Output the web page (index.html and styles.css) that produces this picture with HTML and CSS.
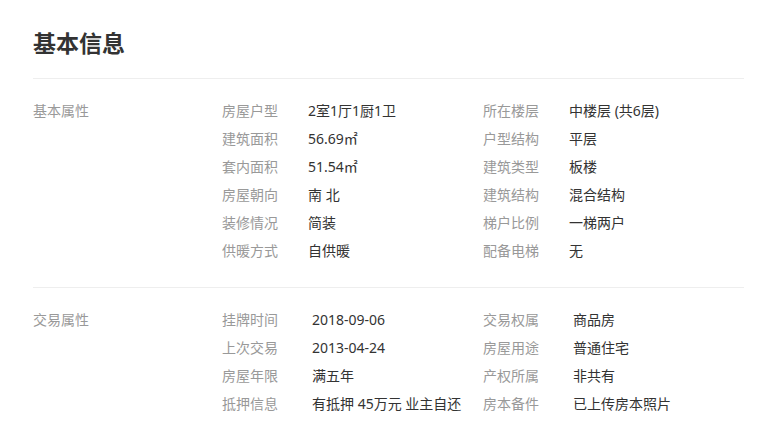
FILE: index.html
```html
<!DOCTYPE html>
<html lang="zh-CN">
<head>
<meta charset="utf-8">
<link rel="stylesheet" href="styles.css">
</head>
<body>
<div class="wrap">
  <h2 class="title">基本信息</h2>
  <div class="section">
    <div class="sec-label">基本属性</div>
    <div class="grid">
      <div class="item"><span class="k">房屋户型</span><span class="v">2室1厅1厨1卫</span></div>
      <div class="item"><span class="k">所在楼层</span><span class="v">中楼层 (共6层)</span></div>
      <div class="item"><span class="k">建筑面积</span><span class="v">56.69㎡</span></div>
      <div class="item"><span class="k">户型结构</span><span class="v">平层</span></div>
      <div class="item"><span class="k">套内面积</span><span class="v">51.54㎡</span></div>
      <div class="item"><span class="k">建筑类型</span><span class="v">板楼</span></div>
      <div class="item"><span class="k">房屋朝向</span><span class="v">南 北</span></div>
      <div class="item"><span class="k">建筑结构</span><span class="v">混合结构</span></div>
      <div class="item"><span class="k">装修情况</span><span class="v">简装</span></div>
      <div class="item"><span class="k">梯户比例</span><span class="v">一梯两户</span></div>
      <div class="item"><span class="k">供暖方式</span><span class="v">自供暖</span></div>
      <div class="item"><span class="k">配备电梯</span><span class="v">无</span></div>
    </div>
  </div>
  <div class="section trade">
    <div class="sec-label">交易属性</div>
    <div class="grid">
      <div class="item"><span class="k">挂牌时间</span><span class="v">2018-09-06</span></div>
      <div class="item"><span class="k">交易权属</span><span class="v">商品房</span></div>
      <div class="item"><span class="k">上次交易</span><span class="v">2013-04-24</span></div>
      <div class="item"><span class="k">房屋用途</span><span class="v">普通住宅</span></div>
      <div class="item"><span class="k">房屋年限</span><span class="v">满五年</span></div>
      <div class="item"><span class="k">产权所属</span><span class="v">非共有</span></div>
      <div class="item"><span class="k">抵押信息</span><span class="v">有抵押 45万元 业主自还</span></div>
      <div class="item"><span class="k">房本备件</span><span class="v">已上传房本照片</span></div>
    </div>
  </div>
</div>
</body>
</html>
```
FILE: styles.css
```css
html, body {
  margin: 0;
  padding: 0;
  background: #fff;
}
body {
  font-family: "Noto Sans", "Noto Sans CJK SC", sans-serif;
  font-size: 14px;
  color: #333;
}
.wrap {
  width: 711px;
  margin-left: 33px;
}
.title {
  margin: 0;
  height: 79px;
  padding-top: 27px;
  box-sizing: border-box;
  font-family: "Noto Sans CJK SC", sans-serif;
  font-size: 23px;
  line-height: 30px;
  font-weight: bold;
  color: #333;
  border-bottom: 1px solid #eee;
}
.section {
  display: flex;
  padding: 18px 0 22px;
  border-bottom: 1px solid #eee;
}
.section.trade {
  border-bottom: none;
}
.sec-label {
  width: 189px;
  flex: none;
  line-height: 28px;
  color: #999;
}
.grid {
  display: grid;
  grid-template-columns: 261px 261px;
}
.item {
  display: flex;
  line-height: 28px;
  white-space: nowrap;
}
.k {
  width: 86px;
  flex: none;
  color: #999;
}
.trade .k {
  width: 90px;
}
.v {
  color: #333;
}
```
